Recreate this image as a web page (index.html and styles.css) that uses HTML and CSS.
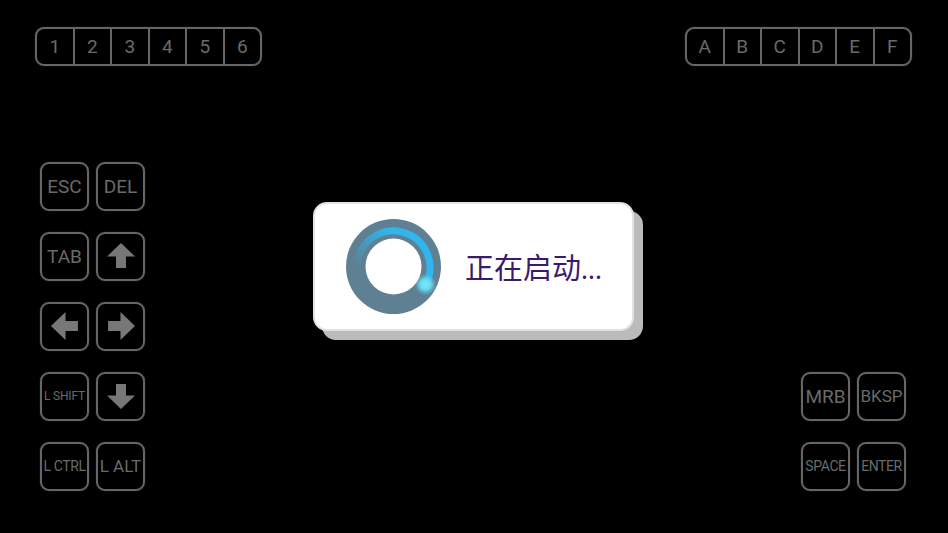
FILE: index.html
```html
<!DOCTYPE html>
<html lang="en">
<head>
  <meta charset="UTF-8">
  <meta name="viewport" content="width=device-width, initial-scale=1.0">
  <title>Starting</title>
  <link rel="stylesheet" href="styles.css">
</head>
<body>
  <div class="screen">
    <div class="top-row">
      <div class="slot-bar">
        <div class="slot">1</div>
        <div class="slot">2</div>
        <div class="slot">3</div>
        <div class="slot">4</div>
        <div class="slot">5</div>
        <div class="slot">6</div>
      </div>
      <div class="slot-bar">
        <div class="slot">A</div>
        <div class="slot">B</div>
        <div class="slot">C</div>
        <div class="slot">D</div>
        <div class="slot">E</div>
        <div class="slot">F</div>
      </div>
    </div>

    <div class="pad-row">
      <div class="pad">
        <div class="key">ESC</div>
        <div class="key">DEL</div>
        <div class="key">TAB</div>
        <div class="key"><svg class="arrow" viewBox="0 0 28 26"><polygon points="14,0 28,13.5 19,13.5 19,25 9,25 9,13.5 0,13.5"/></svg></div>
        <div class="key"><svg class="arrow left" viewBox="0 0 28 26"><polygon points="14,0 28,13.5 19,13.5 19,25 9,25 9,13.5 0,13.5"/></svg></div>
        <div class="key"><svg class="arrow right" viewBox="0 0 28 26"><polygon points="14,0 28,13.5 19,13.5 19,25 9,25 9,13.5 0,13.5"/></svg></div>
        <div class="key tiny">L SHIFT</div>
        <div class="key"><svg class="arrow down" viewBox="0 0 28 26"><polygon points="14,0 28,13.5 19,13.5 19,25 9,25 9,13.5 0,13.5"/></svg></div>
        <div class="key small">L CTRL</div>
        <div class="key medium">L ALT</div>
      </div>
      <div class="pad">
        <div class="key">MRB</div>
        <div class="key medium">BKSP</div>
        <div class="key small">SPACE</div>
        <div class="key small">ENTER</div>
      </div>
    </div>

    <div class="dialog">
      <svg class="spinner" viewBox="0 0 95 95">
        <defs>
          <linearGradient id="arcFade" gradientUnits="userSpaceOnUse" x1="10" y1="48" x2="46" y2="14">
            <stop offset="0" stop-color="#2fb6ee" stop-opacity="0"/>
            <stop offset="1" stop-color="#2fb6ee"/>
          </linearGradient>
          <radialGradient id="glow">
            <stop offset="0" stop-color="#7be6f2"/>
            <stop offset="0.45" stop-color="#6adcf0"/>
            <stop offset="1" stop-color="#5cc8e8" stop-opacity="0"/>
          </radialGradient>
        </defs>
        <circle cx="47.5" cy="47.5" r="47.5" fill="#5f7f93"/>
        <path d="M11 47.5 A36.5 36.5 0 1 1 80 65" fill="none" stroke="url(#arcFade)" stroke-width="7"/>
        <circle cx="79.5" cy="65.5" r="11" fill="url(#glow)"/>
        <circle cx="47.5" cy="47.5" r="28" fill="#fff"/>
      </svg>
      <div class="message">正在启动<span class="dots">...</span></div>
    </div>
  </div>
</body>
</html>
```

FILE: styles.css
```css
body {
  margin: 0;
  background-color: #000000;
  font-family: Roboto, "Noto Sans CJK SC", sans-serif;
}

.screen {
  position: relative;
  width: 948px;
  height: 533px;
  box-sizing: border-box;
  padding-top: 27px;
  overflow: hidden;
}

.top-row {
  display: flex;
  justify-content: space-between;
  padding: 0 36px 0 35px;
}

.slot-bar {
  display: flex;
  width: 227px;
  height: 39px;
  box-sizing: border-box;
  border: 2px solid #666666;
  border-radius: 9px;
  box-shadow: 0 0 1px #666666;
}

.slot {
  flex: 1;
  display: flex;
  align-items: center;
  justify-content: center;
  color: #6a6a6a;
  font-size: 19px;
  border-left: 2px solid #666666;
}

.slot:first-child {
  border-left: none;
}

.pad-row {
  display: flex;
  justify-content: space-between;
  align-items: flex-end;
  margin-top: 96px;
  padding: 0 42px 0 40px;
}

.pad {
  display: grid;
  grid-template-columns: 49px 49px;
  grid-auto-rows: 49px;
  column-gap: 7px;
  row-gap: 21px;
}

.key {
  display: flex;
  align-items: center;
  justify-content: center;
  box-sizing: border-box;
  padding-bottom: 1px;
  border: 2px solid #666666;
  border-radius: 9px;
  box-shadow: 0 0 1px #666666;
  color: #6a6a6a;
  font-size: 19px;
  white-space: nowrap;
}

.key.medium {
  font-size: 17px;
}

.key.small {
  font-size: 14px;
  letter-spacing: -0.4px;
}

.key.tiny {
  font-size: 12px;
  letter-spacing: -0.2px;
}

.arrow {
  width: 28px;
  height: 26px;
  fill: #777777;
}

.arrow.left {
  transform: rotate(-90deg) scaleY(1.08);
}

.arrow.right {
  transform: rotate(90deg) scaleY(1.08);
}

.arrow.down {
  transform: rotate(180deg);
}

.dialog {
  position: absolute;
  left: 313px;
  top: 202px;
  display: flex;
  align-items: center;
  gap: 24px;
  width: 321px;
  height: 129px;
  box-sizing: border-box;
  padding-left: 31px;
  background-color: #ffffff;
  border: 2px solid #e2e2e2;
  border-radius: 14px;
  box-shadow: 9px 9px 0 #bbbbbb;
}

.spinner {
  width: 95px;
  height: 95px;
}

.message {
  margin-top: -2px;
  color: #3a1a6e;
  font-size: 29px;
  font-family: "Noto Sans CJK SC", sans-serif;
}

.dots {
  font-size: 25px;
}
```
